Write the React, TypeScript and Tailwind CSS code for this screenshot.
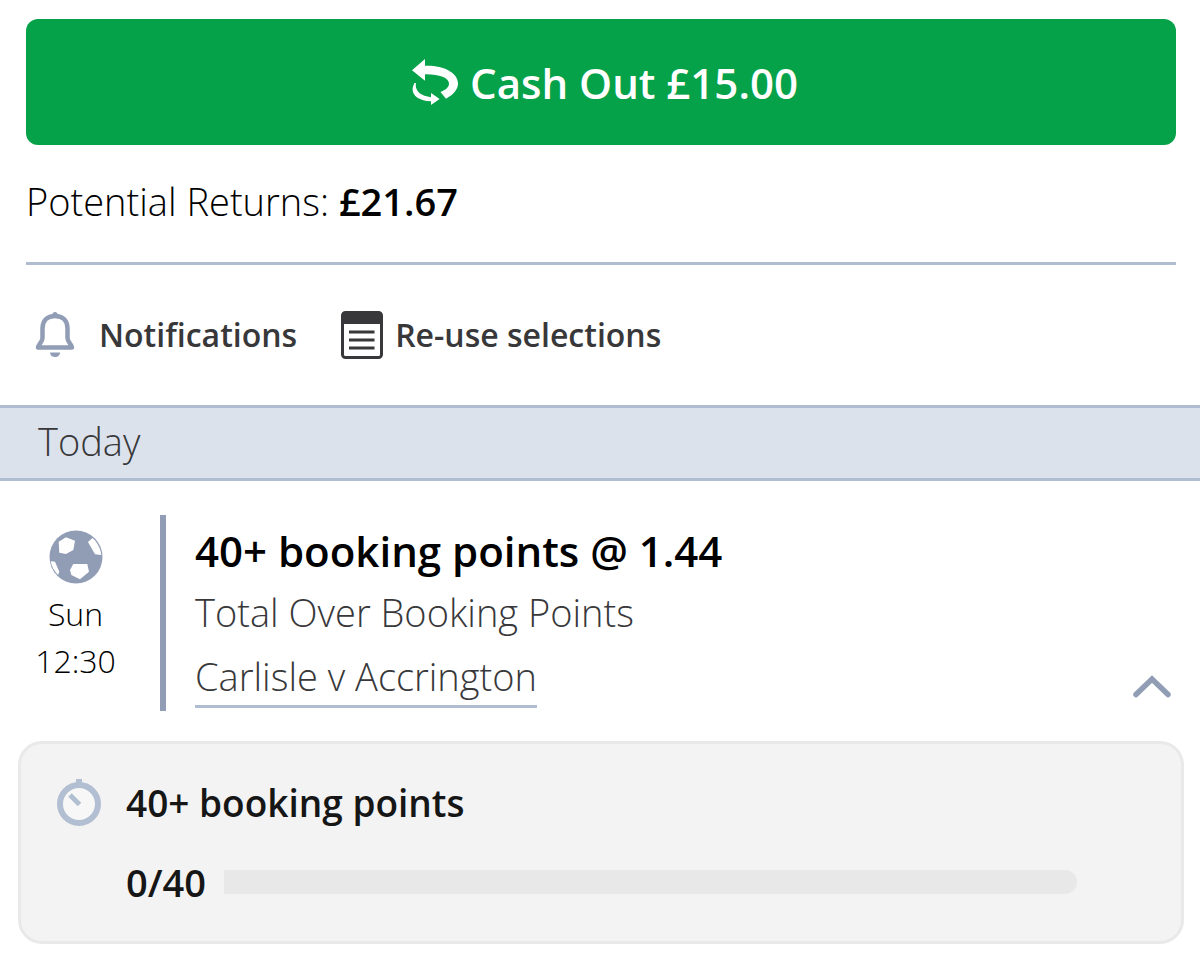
import { useState } from 'react';

const CashOutIcon = () => (
  <svg viewBox="0 0 46 46" className="w-[46px] h-[46px] shrink-0" fill="currentColor" aria-hidden="true">
    <path d="M0 11.300 13 0v6.700C31 6 46 13.500 46 24.500c0 6-4.500 11-12 15.200L28.500 33c5-2.200 8.500-4.500 8.500-8.500 0-6-10-9.500-24-9.300v6.500z" />
    <path d="M2.500 24C-3 34 4 41.500 19 42.300V46l8.600-6L19 34v4.300C8 37 2.500 31.500 4 24z" />
  </svg>
);

const BellIcon = () => (
  <svg viewBox="0 0 40 46" className="w-[40px] h-[46px] shrink-0" aria-hidden="true">
    <circle cx="20" cy="2.500" r="2.500" fill="#919db5" />
    <path
      d="M20 4c-8 0-12.500 5-12.500 12.500V26c0 4-4 6-4.500 9.500h34c-.5-3.500-4.500-5.500-4.500-9.500v-9.500C32.500 9 28 4 20 4z"
      fill="none"
      stroke="#919db5"
      strokeWidth="4.500"
      strokeLinejoin="round"
    />
    <path d="M15 40.500h10c0 2.500-2 4.500-5 4.500s-5-2-5-4.500z" fill="#919db5" />
  </svg>
);

const SlipIcon = () => (
  <svg viewBox="0 0 42 48" className="w-[42px] h-[48px] shrink-0" aria-hidden="true">
    <rect x="1.500" y="1.500" width="39" height="45" rx="3" fill="#fff" stroke="#38383a" strokeWidth="3" />
    <path d="M1 4a3 3 0 0 1 3-3h34a3 3 0 0 1 3 3v9H1z" fill="#38383a" />
    <path d="M8 21h25.500M8 29h25.500M8 37h25.500" stroke="#38383a" strokeWidth="3" />
  </svg>
);

const FootballIcon = () => (
  <svg viewBox="0 0 54 54" className="w-[54px] h-[54px]" aria-hidden="true">
    <circle cx="27" cy="27" r="26.500" fill="#919db5" />
    <g fill="#fff">
      <path d="m9.700 11.700 7.300-4.400 9 3.400-1.700 9.300-7.300 4-6.700-1.300z" />
      <path d="m39 12 4.500-4C48 12 51.500 18 52.300 25l-6.300-.7z" />
      <path d="m21 40 3.300-6h14l1.700 7.700-9 7.600-8.700-4.300z" />
      <path d="m1.700 31.300 4.300.4 4.300 10L9 45c-4-4-6.500-8.500-7.300-13.700z" />
    </g>
  </svg>
);

const TimerIcon = () => (
  <svg viewBox="0 0 46 48" className="w-[46px] h-[48px] shrink-0" aria-hidden="true">
    <path d="M20 0h6v5h-6z" fill="#b2bfd2" />
    <circle cx="23" cy="25" r="19" fill="#f7f7f7" stroke="#b2bfd2" strokeWidth="6" />
    <path d="m14 16 9.500 9.500" stroke="#b2bfd2" strokeWidth="5" />
  </svg>
);

const ChevronUpIcon = () => (
  <svg viewBox="0 0 38 24" className="w-[38px] h-[24px]" aria-hidden="true">
    <path d="M3 20.500 19 5l16 15.500" fill="none" stroke="#919db5" strokeWidth="5.500" strokeLinecap="round" />
  </svg>
);

export default function App() {
  const [isOpen, setIsOpen] = useState(true);
  const bookingPoints = 0;
  const target = 40;

  return (
    <main className="min-h-screen bg-white pt-[19px] font-['Open_Sans',sans-serif] text-black">
      {/* Cash out */}
      <section className="pr-6 pl-[26px]">
        <button className="flex h-[126px] w-full items-center justify-center gap-3 rounded-xl bg-[#06a24a] pl-2 text-[42px] font-semibold text-white">
          <CashOutIcon />
          Cash Out £15.00
        </button>
        <p className="mt-[31px] text-[38px] leading-[50px] font-light">
          Potential Returns: <strong className="font-semibold">£21.67</strong>
        </p>
        <hr className="mt-9 border-0 border-t-3 border-[#b0bdd0]" />
        <div className="flex h-[140px] items-center gap-11 pl-[9px] text-[32px] font-semibold text-[#38383a]">
          <button className="flex items-center gap-6">
            <BellIcon />
            Notifications
          </button>
          <button className="flex items-center gap-3">
            <SlipIcon />
            Re-use selections
          </button>
        </div>
      </section>

      <h2 className="flex h-[76px] items-center border-y-3 border-[#b0bdd0] bg-[#dce2ec] pb-1 pl-[38px] text-[38px] font-light text-[#38383a]">
        Today
      </h2>

      {/* Selection */}
      <section className="mt-[34px] flex">
        <div className="flex w-[160px] flex-col items-center pt-[15px] pr-[9px] text-[32px] leading-[47px] font-light">
          <FootballIcon />
          <span className="mt-1.5">Sun</span>
          <span>12:30</span>
        </div>
        <div className="flex flex-1 items-end justify-between border-l-6 border-[#919db5] pr-[29px] pl-[29px]">
          <div className="pb-[3px] text-[38px] font-light text-[#38383a]">
            <h3 className="pt-1 text-[42px] leading-[63px] font-semibold text-black">40+ booking points @ 1.44</h3>
            <p className="leading-[60px]">Total Over Booking Points</p>
            <a href="#match" className="mt-[5px] inline-block border-b-3 border-[#b0bdd0] leading-[58px]">
              Carlisle v Accrington
            </a>
          </div>
          <button
            aria-label="Toggle selection details"
            aria-expanded={isOpen}
            onClick={() => setIsOpen(!isOpen)}
            className="pb-[13px]"
          >
            <ChevronUpIcon />
          </button>
        </div>
      </section>

      {/* Progress */}
      {isOpen && (
        <section className="mt-[30px] mr-4 ml-[18px] rounded-3xl border-3 border-[#e9e9e9] bg-[#f3f3f3] py-[29px] pr-[104px] pl-[35px] text-[37px] font-semibold text-[#161616]">
          <h4 className="flex items-center gap-6 leading-[60px]">
            <TimerIcon />
            40+ booking points
          </h4>
          <div className="mt-[19px] flex items-center gap-3 pl-[70px] text-[38px] leading-[60px]">
            <span className="min-w-[86px]">{bookingPoints}/{target}</span>
            <div className="h-6 flex-1 overflow-hidden rounded-r-full bg-[#e8e8e8]">
              <div className="h-full bg-[#06a24a]" style={{ width: `${(bookingPoints / target) * 100}%` }} />
            </div>
          </div>
        </section>
      )}
    </main>
  );
}
